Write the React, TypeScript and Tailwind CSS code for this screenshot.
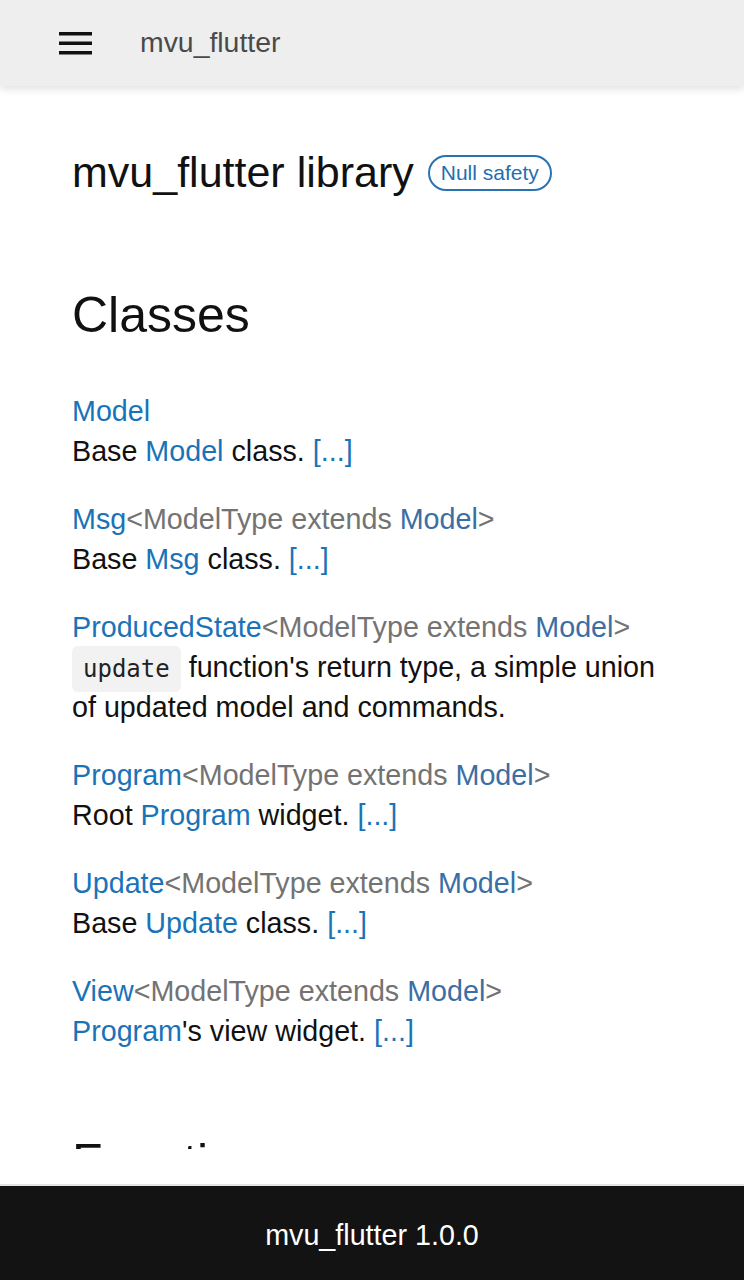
import React from "react";

const sans = { fontFamily: '"Liberation Sans", Arial, sans-serif' };

type Entry = {
  name: string;
  generic?: boolean;
  desc: React.ReactNode;
};

const Link: React.FC<{ children: React.ReactNode }> = ({ children }) => (
  <span className="text-[#1a73b8]">{children}</span>
);

const More = () => <span className="text-[#1a73b8]">[...]</span>;

const entries: Entry[] = [
  {
    name: "Model",
    desc: (
      <>
        Base <Link>Model</Link> class. <More />
      </>
    ),
  },
  {
    name: "Msg",
    generic: true,
    desc: (
      <>
        Base <Link>Msg</Link> class. <More />
      </>
    ),
  },
  {
    name: "ProducedState",
    generic: true,
    desc: (
      <>
        <code
          className="rounded-[6px] bg-[#f2f2f2] px-[11px] py-[9px] text-[24px] leading-none text-[#222]"
          style={{ fontFamily: '"DejaVu Sans Mono", monospace' }}
        >
          update
        </code>{" "}
        function's return type, a simple union of updated model and commands.
      </>
    ),
  },
  {
    name: "Program",
    generic: true,
    desc: (
      <>
        Root <Link>Program</Link> widget. <More />
      </>
    ),
  },
  {
    name: "Update",
    generic: true,
    desc: (
      <>
        Base <Link>Update</Link> class. <More />
      </>
    ),
  },
  {
    name: "View",
    generic: true,
    desc: (
      <>
        <Link>Program</Link>'s view widget. <More />
      </>
    ),
  },
];

const App: React.FC = () => {
  return (
    <div className="flex h-[1280px] w-[744px] flex-col overflow-hidden bg-white" style={sans}>
      {/* Header */}
      <header className="relative z-10 flex h-[86px] shrink-0 items-center bg-[#eeeeee] shadow-[0_3px_8px_rgba(0,0,0,0.12)]">
        <svg width="33" height="23" viewBox="0 0 33 23" className="ml-[59px]">
          <rect x="0" y="0" width="33" height="3.5" fill="#111" />
          <rect x="0" y="9.5" width="33" height="3.5" fill="#111" />
          <rect x="0" y="19" width="33" height="3.5" fill="#111" />
        </svg>
        <span className="ml-[48px] mb-[2px] text-[28.4px] text-[#4a4a4a]">mvu_flutter</span>
      </header>

      {/* Content */}
      <main className="flex-1 overflow-hidden px-[72px] text-[#111]">
        <div className="mt-[60px] flex items-center gap-[14px]">
          <h1 className="text-[43px] leading-[52px]">mvu_flutter library</h1>
          <span className="mt-[2px] flex h-[36px] items-center rounded-full border-2 border-[#2a73b3] px-[11px] text-[21px] text-[#1f6fb0]">
            Null safety
          </span>
        </div>

        <h2 className="mt-[87px] text-[50px] leading-[60px]">Classes</h2>

        <dl className="mt-[46px] flex flex-col gap-[28px] text-[28.7px] leading-[40px]">
          {entries.map((e) => (
            <div key={e.name}>
              <dt>
                <span className="text-[#1a73b8]">{e.name}</span>
                {e.generic && (
                  <span className="text-[#737373]">
                    &lt;ModelType extends <span className="text-[#3b6ea5]">Model</span>&gt;
                  </span>
                )}
              </dt>
              <dd>{e.desc}</dd>
            </div>
          ))}
        </dl>

        <h2 className="mt-[81px] text-[50px] leading-[60px]">Functions</h2>
      </main>

      <div className="h-[35px] shrink-0 bg-white" />

      {/* Footer */}
      <footer className="flex h-[96px] shrink-0 items-center justify-center border-t-2 border-[#e4e4e4] bg-[#131313] pt-[6px]">
        <span className="text-[28.7px] text-white">mvu_flutter 1.0.0</span>
      </footer>
    </div>
  );
};

export default App;
